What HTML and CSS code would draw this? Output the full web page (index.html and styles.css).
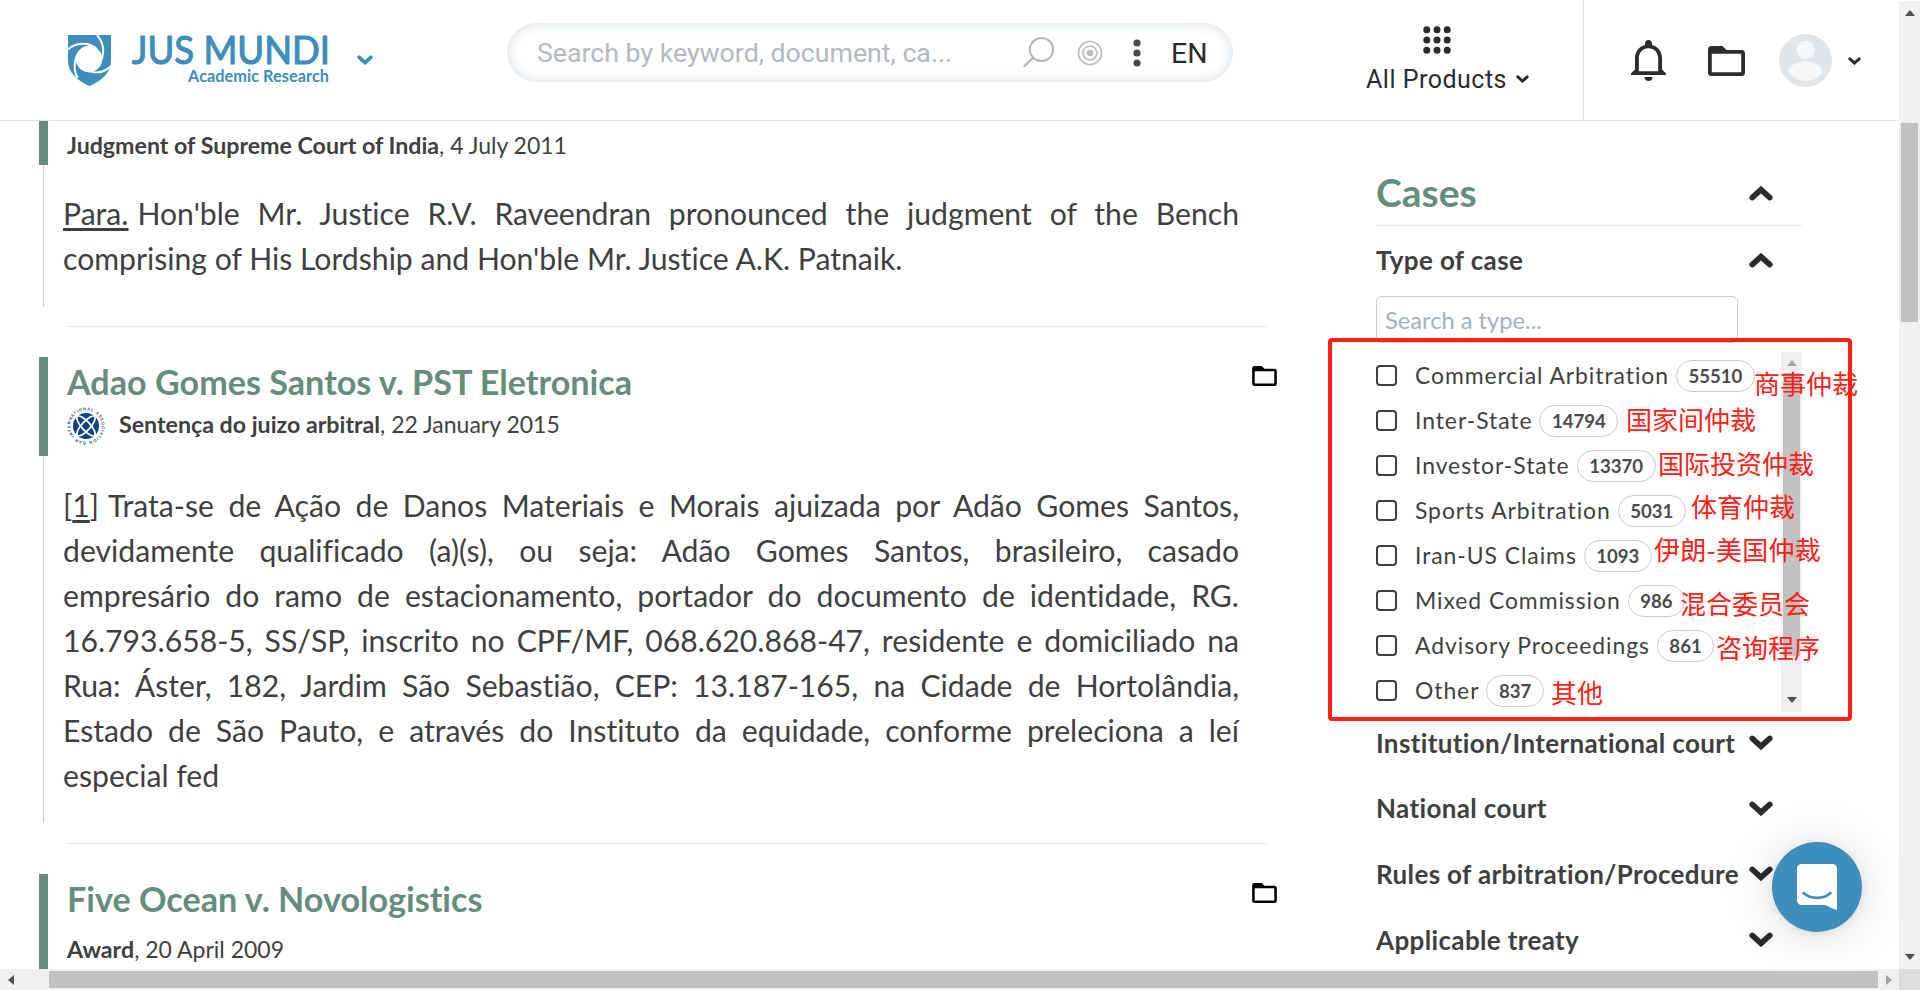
FILE: index.html
```html
<!DOCTYPE html>
<html lang="en">
<head>
<meta charset="utf-8">
<title>Jus Mundi – Academic Research</title>
<link rel="stylesheet" href="styles.css">
</head>
<body>
<svg class="defs" width="0" height="0" aria-hidden="true">
  <symbol id="chev" viewBox="0 0 24 15"><path d="M3.2 3.4 12 11.4 20.8 3.4" fill="none" stroke="currentColor" stroke-width="5.6" stroke-linecap="round" stroke-linejoin="miter"/></symbol>
  <symbol id="folder" viewBox="0 0 37 30"><path d="M3.5 0H14.5L18.5 4H33.5A3.5 3.5 0 0 1 37 7.500V26.500A3.500 3.500 0 0 1 33.500 30H3.500A3.500 3.500 0 0 1 0 26.500V3.500A3.500 3.500 0 0 1 3.500 0ZM3.800 7.800V26.200H33.200V7.800Z" fill="currentColor" fill-rule="evenodd"/></symbol>
</svg>

<header class="topbar">
  <a class="brand">
    <svg class="shield" viewBox="0 0 43 51">
      <path d="M0 0H43V26C43 38 33 46 21.500 51 10 46 0 38 0 26Z" fill="#3d8dbd"/>
      <circle cx="21" cy="24" r="13.200" fill="#fff"/>
      <g fill="none" stroke="#fff" stroke-width="2">
        <path d="M0 14.500C8 7 21 7 29 14"/>
        <path d="M29 0C36 8 37 18 32 29"/>
        <path d="M43 31C35 39 24 39 15 34"/>
        <path d="M9.500 43C5 34 6 24 11 17"/>
      </g>
    </svg>
    <svg class="wordmark" viewBox="0 0 206 52">
      <text class="wm-main" x="0" y="29" textLength="198" lengthAdjust="spacingAndGlyphs">JUS MUNDI</text>
      <text class="wm-sub" x="56" y="47" textLength="141">Academic Research</text>
    </svg>
    <svg class="chev chev-brand"><use href="#chev"/></svg>
  </a>

  <div class="search">
    <span class="search-text">Search by keyword, document, ca...</span>
    <svg class="ico-lens" viewBox="0 0 32 32"><ellipse cx="18.500" cy="13.500" rx="11.600" ry="11.600" fill="none" stroke="#b1b7be" stroke-width="2"/><path d="M10 22 1.500 30" stroke="#b1b7be" stroke-width="2.400" stroke-linecap="round"/></svg>
    <svg class="ico-target" viewBox="0 0 26 26"><g fill="none" stroke="#bdbdbd" stroke-width="1.700"><circle cx="13" cy="13" r="11.500"/><circle cx="13" cy="13" r="7"/></g><circle cx="13" cy="13" r="3.300" fill="#bdbdbd"/></svg>
    <svg class="ico-dots" viewBox="0 0 8 28"><g fill="#46484c"><circle cx="4" cy="4" r="3.600"/><circle cx="4" cy="14" r="3.600"/><circle cx="4" cy="24" r="3.600"/></g></svg>
    <span class="lang">EN</span>
  </div>

  <div class="products">
    <svg class="ico-grid" viewBox="0 0 28 28"><g fill="#2b2b2d"><circle cx="3.800" cy="3.800" r="3.500"/><circle cx="14" cy="3.800" r="3.500"/><circle cx="24.200" cy="3.800" r="3.500"/><circle cx="3.800" cy="14" r="3.500"/><circle cx="14" cy="14" r="3.500"/><circle cx="24.200" cy="14" r="3.500"/><circle cx="3.800" cy="24.200" r="3.500"/><circle cx="14" cy="24.200" r="3.500"/><circle cx="24.200" cy="24.200" r="3.500"/></g></svg>
    <div class="products-label"><span>All Products</span><svg class="chev chev-sm"><use href="#chev"/></svg></div>
  </div>

  <div class="account">
    <svg class="ico-bell" viewBox="0 0 35 41"><path d="M17.500 0C19.800 0 21 1.600 21 3.600V5C27 6.500 31 11.500 31 18V29.500L35 33.500V35H0V33.500L4 29.500V18C4 11.500 8 6.500 14 5V3.600C14 1.600 15.200 0 17.500 0ZM17.500 8.300C11.500 8.300 7.800 12.800 7.800 18.500V31.200H27.200V18.500C27.200 12.800 23.500 8.300 17.500 8.300Z" fill="#2b2b2d" fill-rule="evenodd"/><path d="M13.500 37H21.500C21.500 39.500 19.800 41 17.500 41S13.500 39.500 13.500 37Z" fill="#2b2b2d"/></svg>
    <svg class="ico-folder-lg"><use href="#folder"/></svg>
    <svg class="avatar" viewBox="0 0 53 53"><circle cx="26.500" cy="26.500" r="26.500" fill="#e1e5e8"/><circle cx="26.500" cy="15.800" r="9.200" fill="#f4f6f8"/><path d="M9 36.500C13 30 19 27.500 26.500 27.500S40 30 44 36.500C41 43 34.500 47 26.500 47S12 43 9 36.500Z" fill="#f4f6f8"/></svg>
    <svg class="chev chev-sm"><use href="#chev"/></svg>
  </div>
</header>

<div class="page">
  <main class="results">
    <article class="result result-first">
      <div class="result-head"><p class="meta"><b>Judgment of Supreme Court of India</b>, 4 July 2011</p></div>
      <div class="excerpt"><p><span class="line"><span class="para-ref underlined">Para.</span>Hon'ble Mr. Justice R.V. Raveendran pronounced the judgment of the Bench</span> comprising of His Lordship and Hon'ble Mr. Justice A.K. Patnaik.</p></div>
    </article>
    <article class="result result-logo">
      <div class="result-head">
        <div class="title-row"><h2>Adao Gomes Santos v. PST Eletronica</h2><svg class="ico-folder"><use href="#folder"/></svg></div>
        <div class="meta-row">
          <svg class="iba" viewBox="0 0 38 38">
            <path id="ring" d="M19 34.700A15.700 15.700 0 1 1 19.100 34.700" fill="none"/>
            <text class="iba-text"><textPath href="#ring" textLength="95">BAR INTERNATIONAL ASSOCIATION</textPath></text>
            <circle cx="19" cy="19" r="13" fill="#0f4484"/>
            <g fill="none" stroke="#fff" stroke-width="1.700">
              <ellipse cx="19" cy="19" rx="4.300" ry="12.800" transform="rotate(42 19 19)"/>
              <ellipse cx="19" cy="19" rx="4.300" ry="12.800" transform="rotate(-42 19 19)"/>
            </g>
          </svg>
          <p class="meta"><b>Sentença do juizo arbitral</b>, 22 January 2015</p>
        </div>
      </div>
      <div class="excerpt"><p>
        <span class="line"><span class="para-ref">[<span class="underlined">1</span>]</span>Trata-se de Ação de Danos Materiais e Morais ajuizada por Adão Gomes Santos,</span>
        <span class="line">devidamente qualificado (a)(s), ou seja: Adão Gomes Santos, brasileiro, casado</span>
        <span class="line">empresário do ramo de estacionamento, portador do documento de identidade, RG.</span>
        <span class="line">16.793.658-5, SS/SP, inscrito no CPF/MF, 068.620.868-47, residente e domiciliado na</span>
        <span class="line">Rua: Áster, 182, Jardim São Sebastião, CEP: 13.187-165, na Cidade de Hortolândia,</span>
        <span class="line">Estado de São Pauto, e através do Instituto da equidade, conforme preleciona a leí</span>
        especial fed
      </p></div>
    </article>
    <article class="result result-last">
      <div class="result-head">
        <div class="title-row"><h2>Five Ocean v. Novologistics</h2><svg class="ico-folder"><use href="#folder"/></svg></div>
        <p class="meta"><b>Award</b>, 20 April 2009</p>
      </div>
    </article>
  </main>

  <aside class="filters">
    <div class="filters-title"><h1>Cases</h1><svg class="chev flip"><use href="#chev"/></svg></div>
    <div class="facet"><h3>Type of case</h3><svg class="chev flip"><use href="#chev"/></svg></div>
    <div class="type-search">Search a type...</div>
    <div class="type-list">
      <ul class="options">
        <li><i class="box"></i><span>Commercial Arbitration</span><b class="count">55510</b></li>
        <li><i class="box"></i><span>Inter-State</span><b class="count">14794</b></li>
        <li><i class="box"></i><span>Investor-State</span><b class="count">13370</b></li>
        <li><i class="box"></i><span>Sports Arbitration</span><b class="count">5031</b></li>
        <li><i class="box"></i><span>Iran-US Claims</span><b class="count">1093</b></li>
        <li><i class="box"></i><span>Mixed Commission</span><b class="count">986</b></li>
        <li><i class="box"></i><span>Advisory Proceedings</span><b class="count">861</b></li>
        <li><i class="box"></i><span>Other</span><b class="count">837</b></li>
      </ul>
      <div class="inner-scroll">
        <svg class="arrow" viewBox="0 0 10 6"><path d="M0 6 5 0 10 6Z" fill="#a3a3a3"/></svg>
        <div class="inner-thumb"></div>
        <svg class="arrow" viewBox="0 0 10 6"><path d="M0 0 5 6 10 0Z" fill="#505050"/></svg>
      </div>
    </div>
    <div class="facet-list">
      <div class="facet"><h3>Institution/International court</h3><svg class="chev"><use href="#chev"/></svg></div>
      <div class="facet"><h3>National court</h3><svg class="chev"><use href="#chev"/></svg></div>
      <div class="facet"><h3>Rules of arbitration/Procedure</h3><svg class="chev"><use href="#chev"/></svg></div>
      <div class="facet"><h3>Applicable treaty</h3><svg class="chev"><use href="#chev"/></svg></div>
    </div>
  </aside>
</div>

<!-- Annotations drawn over the filter list -->
<div class="mark-box"></div>
<div class="mark m1">商事仲裁</div>
<div class="mark m2">国家间仲裁</div>
<div class="mark m3">国际投资仲裁</div>
<div class="mark m4">体育仲裁</div>
<div class="mark m5">伊朗-美国仲裁</div>
<div class="mark m6">混合委员会</div>
<div class="mark m7">咨询程序</div>
<div class="mark m8">其他</div>

<div class="chat">
  <svg viewBox="0 0 40 46"><path d="M4.500 0H35.500A4.500 4.500 0 0 1 40 4.500V46C36 45 32 43 28.500 41H4.500A4.500 4.500 0 0 1 0 36.500V4.500A4.500 4.500 0 0 1 4.500 0Z" fill="#fff"/><path d="M6.500 29C14 35.500 26 35.500 33.500 29" fill="none" stroke="#3d8dbd" stroke-width="2.600" stroke-linecap="round"/></svg>
</div>

<div class="vscroll">
  <svg class="arrow" viewBox="0 0 10 6"><path d="M0 6 5 0 10 6Z" fill="#505050"/></svg>
  <div class="vthumb"></div>
  <svg class="arrow" viewBox="0 0 10 6"><path d="M0 0 5 6 10 0Z" fill="#505050"/></svg>
</div>
<div class="hscroll">
  <svg class="arrow-h" viewBox="0 0 6 10"><path d="M6 0 0 5 6 10Z" fill="#505050"/></svg>
  <div class="hthumb"></div>
  <svg class="arrow-h" viewBox="0 0 6 10"><path d="M0 0 6 5 0 10Z" fill="#a3a3a3"/></svg>
</div>
<div class="corner"></div>
</body>
</html>
```
FILE: styles.css
```css
* { box-sizing: border-box; }
body {
  margin: 0;
  width: 1920px;
  height: 990px;
  overflow: hidden;
  position: relative;
  background: #fff;
  color: #3f3f41;
  font-family: Lato, "Noto Sans CJK SC", sans-serif;
  font-variant-ligatures: none;
}
h1, h2, h3, p, ul { margin: 0; padding: 0; }
svg { display: block; flex: none; }
.defs { position: absolute; }
.chev { width: 24px; height: 15px; color: #2b2b2d; }
.flip { transform: rotate(180deg); }
.chev-sm { width: 13px; height: 8px; }

/* Top bar */
.topbar {
  display: flex;
  align-items: flex-start;
  width: 1899px;
  height: 121px;
  border-bottom: 1px solid #e1e4e6;
}
.brand { display: flex; width: 507px; padding: 35px 0 0 68px; }
.shield { width: 43px; height: 51px; }
.wordmark { width: 206px; height: 52px; margin-left: 21px; overflow: visible; }
.wm-main { font: 400 38.500px Lato, sans-serif; fill: #3d8dbd; stroke: #3d8dbd; stroke-width: 1.100px; stroke-linejoin: round; }
.wm-sub { font: 700 16.250px Lato, sans-serif; fill: #3d8dbd; }
.chev-brand { width: 16px; height: 10px; margin: 20px 0 0 19px; color: #3d8dbd; }
.search {
  display: flex;
  align-items: center;
  width: 726px;
  height: 59px;
  margin-top: 23px;
  padding-left: 30px;
  border-radius: 30px;
  box-shadow: inset 0 0 14px #d5dce2;
  font-family: Roboto, sans-serif;
}
.search-text { width: 486px; font-size: 26.700px; color: #b3b9c0; white-space: nowrap; }
.ico-lens { width: 32px; height: 32px; margin-top: -1px; }
.ico-target { width: 26px; height: 26px; margin-left: 22px; }
.ico-dots { width: 8px; height: 28px; margin-left: 30px; }
.lang { margin: 2px 0 0 30px; font-size: 28.500px; color: #2b2b2d; }
.products {
  display: flex;
  flex-direction: column;
  align-items: flex-start;
  width: 351px;
  height: 120px;
  padding: 26px 0 0 133px;
  border-right: 1px solid #e1e4e6;
}
.ico-grid { width: 28px; height: 28px; margin-left: 57px; }
.products-label {
  display: flex;
  align-items: center;
  margin-top: 11px;
  gap: 9px;
  font: 25px/30px Roboto, sans-serif;
  letter-spacing: 0.500px;
  color: #2b2b2d;
}
.products-label .chev { margin-top: -2px; }
.account { display: flex; align-items: flex-start; padding: 34px 0 0 47px; }
.ico-bell { width: 35px; height: 41px; margin-top: 6px; }
.ico-folder-lg { width: 37px; height: 30px; margin: 12px 0 0 42px; color: #2b2b2d; }
.avatar { width: 53px; height: 53px; margin-left: 34px; }
.account .chev-sm { margin: 23px 0 0 16px; }

/* Search results */
.page { display: flex; width: 1899px; height: 848px; overflow: hidden; }
.results { width: 1376px; flex: none; }
.result-head {
  margin-left: 39px;
  width: 1238px;
  border-left: 9px solid #658d7d;
  padding-left: 19px;
}
.meta { font-size: 23px; line-height: 34px; white-space: nowrap; }
.meta b { font-size: 23.200px; }
.result-first .result-head { height: 44px; padding-top: 7px; }
.title-row { display: flex; justify-content: space-between; padding-top: 3px; }
.title-row h2 { font-size: 34.150px; line-height: 44px; font-weight: 700; color: #658d7d; white-space: nowrap; }
.ico-folder { width: 25px; height: 20px; margin-top: 6px; color: #000; }
.meta-row { display: flex; gap: 14px; padding-top: 3px; }
.iba { width: 38px; height: 38px; overflow: visible; }
.iba-text { font: 700 4.200px "Liberation Sans", sans-serif; fill: #2a5a94; }
.result-logo .result-head { height: 99px; }
.result-last .result-head { height: 130px; }
.result-last .meta { margin-top: 11px; }
.excerpt {
  margin-left: 43px;
  width: 1196px;
  border-left: 1px solid #c9c9c9;
  padding: 27px 0 25px 19px;
}
.result-first .excerpt { padding: 26px 0 26px 19px; }
.excerpt p { font-size: 30.160px; line-height: 45px; white-space: normal; }
.line { display: block; text-align: justify; text-align-last: justify; white-space: nowrap; }
.para-ref { margin-right: 9px; }
.underlined { text-decoration: underline; text-decoration-thickness: 2.500px; text-underline-offset: 3px; text-decoration-skip-ink: none; }
.result + .result::before {
  content: "";
  display: block;
  height: 1px;
  width: 1200px;
  margin: 19px 0 30px 67px;
  background: #e8e9ea;
}
.result-last.result::before { margin-top: 20px; }

/* Filters */
.filters { width: 426px; flex: none; }
.filters-title {
  display: flex;
  justify-content: space-between;
  padding: 47px 29px 0 0;
  height: 105px;
  border-bottom: 1px solid #e8e9ea;
}
.filters-title h1 { font-size: 39px; line-height: 48px; font-weight: 700; color: #658d7d; }
.filters-title .chev { margin-top: 18px; }
.facet { display: flex; justify-content: space-between; align-items: center; height: 65.600px; padding-right: 29px; }
.facet h3 { font-size: 26px; line-height: 34px; font-weight: 700; letter-spacing: 0.360px; white-space: nowrap; }
.filters-title + .facet { height: 68px; }
.type-search {
  width: 362px;
  height: 47px;
  margin-top: 2px;
  padding-left: 8px;
  border: 1px solid #cbcbcb;
  border-radius: 6px;
  font-size: 23.700px;
  line-height: 46px;
  color: #a3b0c2;
}
.type-list { display: flex; justify-content: space-between; height: 360px; margin-top: 9px; }
.options { list-style: none; }
.options li { display: flex; align-items: center; height: 45px; font-size: 22.900px; letter-spacing: 0.950px; color: #3f3f41; white-space: nowrap; }
.box { width: 21px; height: 21px; margin: 2px 18px 0 0; border: 2px solid #3f3f41; border-radius: 4px; }
.count {
  display: flex;
  justify-content: center;
  align-items: center;
  height: 32px;
  margin: 2px 0 0 7px;
  padding: 0 11.500px;
  border: 1px solid #cbcbcb;
  border-radius: 16px;
  font-size: 18.600px;
  letter-spacing: 0;
  color: #4a4a4c;
}
.inner-scroll { display: flex; flex-direction: column; align-items: center; width: 21px; padding: 8px 0 9px; background: #f0f0f0; }
.inner-thumb { width: 17px; height: 283px; margin: 7px 0 auto; background: #c1c1c1; }
.arrow { width: 10px; height: 6px; }
.facet-list { margin-top: -2px; }

/* Annotations */
.mark-box { position: absolute; left: 1328px; top: 338px; width: 524px; height: 383px; border: 4px solid #ff2015; border-radius: 4px; }
.mark { position: absolute; font: 26px/36px "Noto Sans CJK SC", sans-serif; color: #ff2015; white-space: nowrap; }
.m1 { left: 1754px; top: 365px; }
.m2 { left: 1626px; top: 401px; }
.m3 { left: 1658px; top: 445px; }
.m4 { left: 1691px; top: 488px; }
.m5 { left: 1654px; top: 531px; letter-spacing: 0.300px; }
.m6 { left: 1680px; top: 585px; }
.m7 { left: 1716px; top: 629px; }
.m8 { left: 1551px; top: 674px; }

/* Chat launcher */
.chat {
  position: absolute;
  left: 1772px;
  top: 842px;
  width: 90px;
  height: 90px;
  display: flex;
  align-items: center;
  justify-content: center;
  border-radius: 50%;
  background: #3d8dbd;
  box-shadow: 0 2px 9px rgba(0, 0, 0, 0.08), 0 3px 50px rgba(0, 0, 0, 0.15);
}
.chat svg { width: 40px; height: 46px; }

/* Window scrollbars */
.vscroll {
  position: absolute;
  left: 1899px;
  top: 1px;
  width: 21px;
  height: 968px;
  display: flex;
  flex-direction: column;
  align-items: center;
  padding: 9px 0;
  background: #f0f0f0;
}
.vthumb { width: 17px; height: 199px; margin: 107px 0 auto; background: #c1c1c1; }
.hscroll {
  position: absolute;
  left: 0;
  top: 969px;
  width: 1899px;
  height: 21px;
  display: flex;
  align-items: center;
  padding: 0 7px 0 8px;
  background: #f0f0f0;
}
.arrow-h { width: 6px; height: 10px; }
.hthumb { width: 1829px; height: 17px; margin: 0 auto 0 35px; background: #c1c1c1; }
.corner { position: absolute; left: 1899px; top: 969px; width: 21px; height: 21px; background: #dcdcdc; }
```
